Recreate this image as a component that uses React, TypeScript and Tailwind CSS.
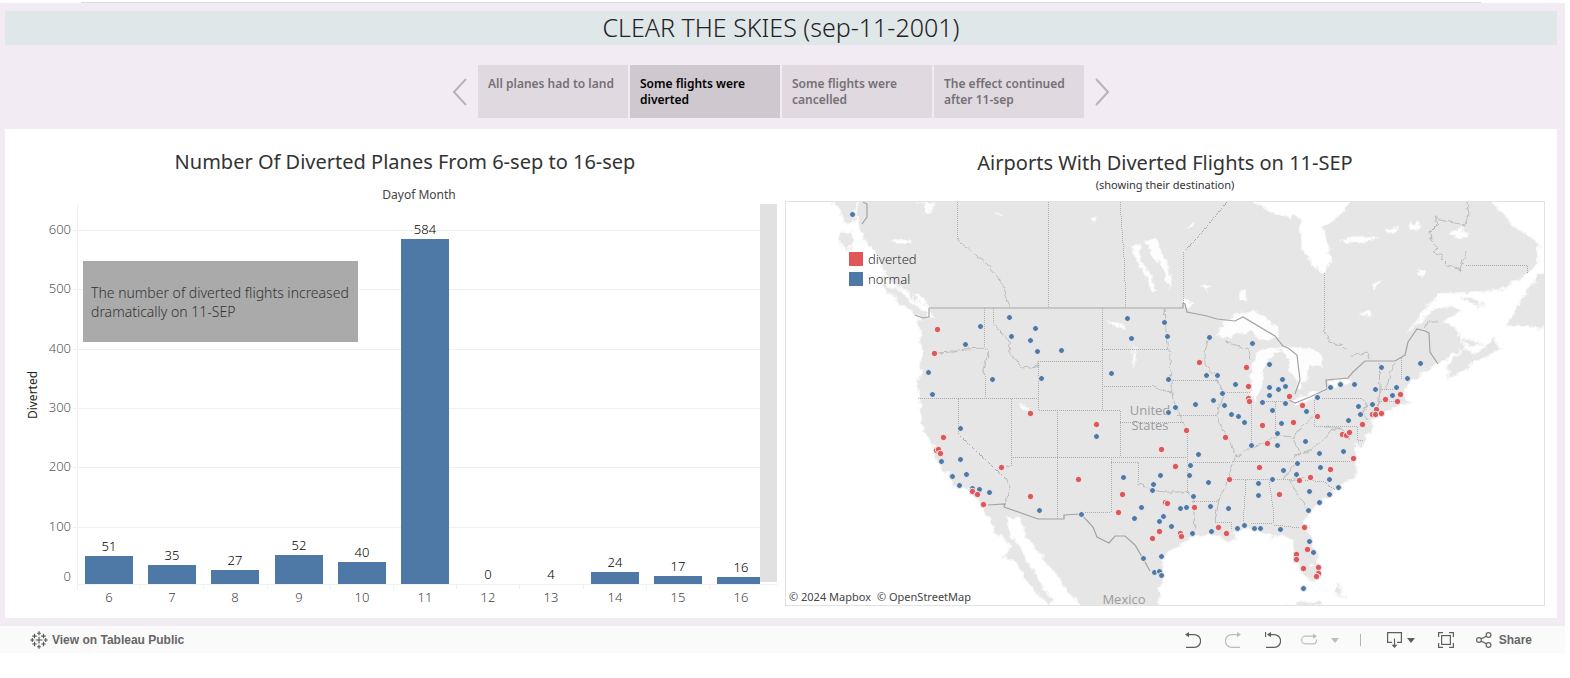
import type { ReactNode } from "react";

type Point = [number, number];

const steps = [
  { label: "All planes had to land", active: false },
  { label: "Some flights were diverted", active: true },
  { label: "Some flights were cancelled", active: false },
  { label: "The effect continued after 11-sep", active: false },
];

const days = [
  { day: 6, count: 51 },
  { day: 7, count: 35 },
  { day: 8, count: 27 },
  { day: 9, count: 52 },
  { day: 10, count: 40 },
  { day: 11, count: 584 },
  { day: 12, count: 0 },
  { day: 13, count: 4 },
  { day: 14, count: 24 },
  { day: 15, count: 17 },
  { day: 16, count: 16 },
];

const ticks = [100, 200, 300, 400, 500, 600];

const normalAirports: Point[] = [
  [852, 214], [1009, 317], [980, 326], [1035, 328], [1011, 336], [1030, 340], [965, 344], [1037, 351],
  [928, 372], [992, 379], [932, 394], [1127, 318], [1164, 322], [1131, 338], [1167, 336], [1061, 350],
  [1041, 378], [1111, 373], [1168, 379], [1209, 337], [1252, 343], [1206, 375], [1217, 375], [1235, 384],
  [1222, 393], [1213, 400], [1269, 364], [1282, 379], [1285, 386], [1278, 389], [1269, 387], [1269, 395],
  [1381, 367], [1420, 363], [1407, 378], [1396, 387], [1392, 395], [1375, 389], [1354, 384], [1340, 384],
  [1330, 387], [1317, 397], [960, 428], [960, 459], [941, 461], [966, 474], [952, 476], [959, 485],
  [972, 488], [979, 489], [989, 492], [975, 493], [1039, 510], [1081, 514], [1096, 436], [1175, 407],
  [1168, 412], [1195, 404], [1224, 405], [1231, 414], [1238, 416], [1244, 422], [1262, 402], [1285, 403],
  [1272, 410], [1281, 423], [1277, 433], [1277, 445], [1251, 445], [1306, 411], [1305, 441], [1319, 453],
  [1343, 451], [1348, 420], [1198, 454], [1190, 465], [1189, 475], [1208, 482], [1193, 496], [1160, 475],
  [1153, 484], [1152, 490], [1123, 477], [1141, 507], [1134, 518], [1163, 516], [1159, 521], [1171, 526],
  [1180, 508], [1186, 507], [1210, 506], [1228, 508], [1192, 533], [1211, 531], [1237, 528], [1244, 525],
  [1254, 528], [1260, 528], [1280, 529], [1258, 483], [1258, 495], [1272, 479], [1283, 470], [1297, 463],
  [1296, 474], [1320, 467], [1329, 479], [1338, 487], [1329, 494], [1309, 491], [1319, 502], [1308, 510],
  [1309, 541], [1313, 552], [1303, 588], [1143, 558], [1161, 556], [1154, 572], [1159, 571], [1161, 575],
  [1372, 404], [1358, 406], [1360, 414],
];

const divertedAirports: Point[] = [
  [937, 329], [934, 353], [1199, 362], [1246, 367], [1248, 386], [1289, 396], [1400, 394], [1385, 399],
  [1397, 401], [943, 437], [936, 450], [938, 449], [940, 453], [972, 491], [977, 494], [983, 504],
  [1001, 467], [1030, 413], [1030, 496], [1078, 479], [1096, 424], [1118, 512], [1248, 398], [1249, 401],
  [1302, 405], [1317, 416], [1293, 422], [1262, 425], [1267, 443], [1225, 437], [1186, 430], [1161, 449],
  [1175, 466], [1259, 467], [1229, 479], [1299, 480], [1310, 477], [1330, 469], [1279, 494], [1122, 494],
  [1165, 502], [1167, 503], [1194, 507], [1159, 531], [1152, 538], [1180, 533], [1181, 536], [1218, 527],
  [1226, 533], [1304, 527], [1307, 549], [1296, 554], [1296, 559], [1303, 568], [1318, 567], [1318, 573],
  [1316, 576], [1376, 409], [1372, 414], [1375, 414], [1381, 413], [1362, 424], [1342, 434], [1346, 435],
  [1349, 432], [1353, 458],
];

const land = [
  // Mainland, clockwise from the northern Pacific coast
  "M857 190 L858 218 862 233 868 243 876 252 883 266 888 277 896 287 908 291 914 300 927 303 931 309 935 319 929 319 917 318 920 330 922 345 922 357 921 370 918 383 919 398 921 417 925 433 934 445 938 462 948 473 954 483 968 488 977 496 983 507 990 518 997 533 1012 546 1005 557 1018 563 1028 582 1047 603 1053 601 1042 587 1033 572 1022 553 1012 537 1004 517 1020 518 1027 537 1043 557 1055 573 1067 588 1084 610 L1158 610 1158 590 1162 577 1161 560 1172 548 1193 537 1210 533 1220 537 1228 540 1235 538 1232 532 1243 527 1260 530 1273 537 1282 533 1293 540 1297 557 1302 572 1310 582 1318 580 1321 570 1313 547 1307 530 1305 520 1313 507 1330 493 1340 485 1350 480 1357 472 1355 458 1352 443 1362 447 1365 437 1373 427 1370 418 1388 410 1408 402 1400 397 1405 390 1412 380 1437 363 1463 348 1460 340 1455 327 1443 322 1460 312 1453 307 1433 310 1405 335 1423 310 1440 293 1500 290 1527 273 1538 265 1538 243 1523 233 1507 220 1484 190 L1352 190 1350 202 1340 215 1325 227 1332 257 1330 265 1325 273 1317 270 1300 248 1300 220 1298 218 1275 215 1245 196 1245 190 Z",
  // Vancouver Island, Haida Gwaii, Alaska panhandle
  "M881 277 L888 287 900 292 912 303 925 313 927 319 915 313 900 302 885 287 Z",
  "M841 233 L852 233 851 247 847 251 840 240 Z",
  "M831 190 L835 203 842 213 843 221 853 222 855 206 853 190 Z",
  // Nova Scotia, Prince Edward Island, Newfoundland, Anticosti
  "M1447 367 L1450 378 1473 363 1500 348 1493 340 1477 353 1463 349 Z",
  "M1461 340 L1470 346 1480 344 1472 341 Z",
  "M1560 262 L1540 275 1523 297 1507 325 1560 328 Z",
  "M1462 296 L1475 300 1484 306 1470 303 Z",
  // Bahamas, Cuba
  "M1336 583 L1340 590 1342 595 1337 591 Z",
  "M1288 606 L1300 602 1318 604 1320 606 Z",
];

const lakes = [
  "M1215 337 L1225 322 1240 312 1260 312 1277 327 1279 338 1262 340 1250 330 1230 338 Z",
  "M1272 347 L1256 353 1250 377 1252 397 1254 402 1259 395 1263 387 1262 370 1272 356 1285 350 Z",
  "M1273 345 L1297 348 1312 349 1321 357 1322 367 1312 363 1303 384 1297 390 1296 380 1292 373 1287 358 Z",
  "M1290 402 L1305 395 1324 389 1312 400 1297 406 Z",
  "M1327 384 L1338 379 1352 379 1350 383 1332 386 Z",
  "M1145 240 L1157 238 1163 256 1172 277 1168 290 1165 275 1152 253 Z",
  "M1131 243 L1140 245 1141 262 1150 272 1157 290 1151 290 1146 274 1137 262 Z",
  "M1020 403 L1024 404 1029 412 1024 411 Z",
  "M1239 291 L1246 291 1246 301 1238 300 Z",
  "M1450 233 L1460 229 1469 234 1462 238 1450 236 Z",
  "M1340 239 L1360 236 1378 238 1362 243 1343 242 Z",
  "M1386 230 L1398 226 1396 232 1388 233 Z",
  "M1410 224 L1420 223 1418 230 1410 230 Z",
  "M1419 268 L1426 270 1423 279 1418 275 Z",
  "M1382 278 L1374 290 1373 285 Z",
  "M1360 315 L1370 311 1372 316 Z",
  "M1091 217 L1098 216 1096 221 Z",
  "M1187 227 L1195 222 1193 227 Z",
  "M1183 299 L1193 302 1190 307 1184 305 Z",
  "M1200 287 L1212 288 1206 291 Z",
  "M890 241 L902 238 914 243 900 244 Z",
  "M918 202 L935 203 930 214 922 204 Z",
  "M993 213 L1005 213 1000 215 Z",
  "M1108 320 L1118 323 1126 327 1117 328 Z",
  "M1134 345 L1136 360 1133 367 1133 357 Z",
  "M1310 563 L1314 563 1314 567 1310 566 Z",
  "M911 293 L921 298 928 301 926 307 918 302 Z",
];

const straightBorders = [
  "M957 202 V238", "M1048 202 V308", "M1120 202 L1124 257 1126 307", "M1227 202 L1198 237 1183 253 V303",
  "M1324 273 V330", "M1466 265 H1527 V273", "M984 308 V348", "M993 308 V323", "M918 398 H1038",
  "M958 399 V434 L1006 479", "M1011 399 V467", "M1038 361 V410 H1120 V457", "M1038 361 H1102", "M1102 308 V410",
  "M1057 410 V519", "M1011 457 H1187", "M1120 422 H1183", "M1102 349 H1168", "M1102 386 H1152",
  "M1171 380 H1219", "M1177 415 H1216", "M1187 430 L1188 493", "M1187 462 H1230", "M1192 501 H1219",
  "M1111 457 V512 H1081", "M1111 462 H1138 V483", "M1215 522 H1231 L1232 530", "M1246 480 L1243 525",
  "M1269 480 L1274 515 1273 523 H1250", "M1274 525 L1300 528", "M1229 479 H1290", "M1233 461 H1352",
  "M1251 405 V445", "M1275 402 V436", "M1262 401 H1288", "M1225 392 H1250", "M1314 398 V426 H1357 V440 H1364",
  "M1320 398 H1362", "M1380 390 L1400 389", "M1379 401 H1397", "M1401 358 V380", "M985 376 V398",
  "M1305 480 L1324 482 1335 490",
];

const riverBorders = [
  "M957 238 L960 242 972 252 987 264 1000 280 1005 290 1006 298 1011 307",
  "M1324 330 L1330 342 1343 346 1352 355 1368 353 1370 359",
  "M1467 202 L1469 215 1465 225 1450 222 1440 220 1434 216 1438 224 1430 232 1431 240 1437 248 1434 252 1442 255 1442 260 1447 265 1460 270 1463 260 1467 252",
  "M1424 329 L1427 322 1438 322", "M984 348 L989 352 983 370 985 376", "M937 353 L953 352 965 349 984 348",
  "M993 323 L1009 341 1010 353 1022 368 1038 366 1038 361", "M1006 466 L1011 467", "M1006 479 L1010 487 1006 500 1005 504",
  "M1152 386 L1160 390 1172 392", "M1164 308 L1166 330 1169 350 1170 355 1171 385 1173 400 1178 410 1183 422 1187 430",
  "M1209 337 L1205 352 1205 365 1216 375 1220 385 1224 395 1216 415 1222 428 1232 445 1236 455 1232 467 1226 485 1219 500 1216 515 1215 522",
  "M1188 493 L1193 497 1194 515 1195 530", "M1138 483 L1150 490 1165 492 1180 492 1188 493",
  "M1283 478 L1290 470 1300 462", "M1289 480 L1298 495 1307 508", "M1290 480 L1305 477",
  "M1236 457 L1251 448 1262 443 1277 436 1293 438 1303 425 1314 415", "M1225 341 L1240 347 1249 350 1251 360",
  "M1362 398 L1367 405 1363 412 1367 420", "M1379 362 L1380 390 1378 410", "M1395 362 L1390 375 1386 390",
  "M1293 455 L1305 453 1320 443 1332 430 1340 428", "M1293 438 L1297 448 1302 453 1290 460", "M1324 427 L1335 427 1345 431 1350 440",
];

const nationalBorders = [
  "M929 308 H1183 V303",
  "M1183 303 L1185 304 1187 312 1197 314 1207 316 1217 319 1235 321 1243 317 1275 336 1283 346 1288 348 1297 355 1300 380 1295 394",
  "M1289 400 L1295 403 1310 397 1327 389 1326 380 1348 378 1353 372 1365 361 H1395 L1405 355 1408 342 1417 329 1425 331 1429 333 1430 352 1438 364",
  "M988 505 L1005 504 1004 507 1038 519 H1064 V515 L1081 514 1093 527 1097 537 1109 543 1115 536 1125 536 1135 545 1145 562 1150 571",
  "M863 202 L867 204 867 217 862 224", "M915 315 L923 318 929 317 929 308",
];

function MapView() {
  return (
    <svg viewBox="786 202 758 403" className="block h-auto w-full" role="img" aria-label="Map of airports">
      <defs>
        <filter id="coast" x="-5%" y="-5%" width="110%" height="110%">
          <feTurbulence type="fractalNoise" baseFrequency="0.12" numOctaves="3" seed="4" />
          <feDisplacementMap in="SourceGraphic" scale="9" xChannelSelector="R" yChannelSelector="G" />
        </filter>
        <filter id="river" x="-5%" y="-5%" width="110%" height="110%">
          <feTurbulence type="fractalNoise" baseFrequency="0.2" numOctaves="2" seed="9" />
          <feDisplacementMap in="SourceGraphic" scale="5" xChannelSelector="R" yChannelSelector="G" />
        </filter>
      </defs>
      <g filter="url(#coast)">
        <path d={land.join(" ")} fill="#e6e6e6" stroke="#f6f6f6" strokeWidth="3" paintOrder="stroke" />
        <path d={lakes.join(" ")} fill="#fdfdfd" stroke="#f2f2f2" strokeWidth="1" />
      </g>
      <g fill="none" stroke="#adadad" strokeWidth="1">
        <path d={straightBorders.join(" ")} shapeRendering="crispEdges" strokeDasharray="1 1" />
        <path d={riverBorders.join(" ")} stroke="#bbb" filter="url(#river)" />
      </g>
      <path d={nationalBorders.join(" ")} fill="none" stroke="#a3a3a3" strokeWidth="1.2" />
      <g fill="#9b9b9b" fontSize="13" fontFamily="'Open Sans', 'Noto Sans', sans-serif" textAnchor="middle">
        <text x="1150" y="415">United</text>
        <text x="1150" y="430">States</text>
        <text x="1124" y="604">Mexico</text>
      </g>
      <g stroke="#f3f3f3" strokeWidth="1">
        {normalAirports.map(([x, y], i) => (
          <circle key={i} cx={x + 0.5} cy={y + 0.5} r="3" fill="#4e79a7" />
        ))}
        {divertedAirports.map(([x, y], i) => (
          <circle key={i} cx={x + 0.5} cy={y + 0.5} r="3.2" fill="#dd5658" />
        ))}
      </g>
    </svg>
  );
}

function BarChart() {
  const left = 77;
  const pitch = 63.2;
  const zero = 586.2;
  const base = 584;
  const unit = 0.594;
  return (
    <svg viewBox="5 187 780 420" className="block h-auto w-full font-light" role="img" aria-label="Diverted flights by day" fontFamily="'Noto Sans', 'Open Sans', sans-serif">
      <text x="419" y="199" fontSize="12" textAnchor="middle" fill="#444" className="font-normal">Dayof Month</text>
      <text transform="translate(37 395) rotate(-90)" fontSize="12" textAnchor="middle" fill="#222" className="font-normal">Diverted</text>
      <g shapeRendering="crispEdges" fill="#f0f0f0">
        <rect x={left} y="204" width="1" height="386" />
        {ticks.map((t) => (
          <rect key={t} x="73" y={Math.round(zero - t * unit)} width="687" height="1" />
        ))}
        <rect x={left} y={base} width="700" height="1" />
        {days.slice(1).map((d, i) => (
          <rect key={d.day} x={Math.round(left + pitch * (i + 1))} y={base} width="1" height="5" />
        ))}
      </g>
      <g fontSize="13" fill="#555" textAnchor="end">
        {ticks.map((t) => (
          <text key={t} x="71" y={Math.round(zero - t * unit) + 4}>{t}</text>
        ))}
        <text x="71" y="581">0</text>
      </g>
      {days.map((d, i) => {
        const x = Math.round(85 + pitch * i);
        const top = Math.min(base, Math.round(zero - d.count * unit));
        return (
          <g key={d.day}>
            {d.count > 4 && (
              <rect x={x} y={top} width={Math.min(48, 760 - x)} height={base - top} fill="#4e79a7" shapeRendering="crispEdges" />
            )}
            <text x={x + 24} y={top - 5} fontSize="13" textAnchor="middle" fill="#000">{d.count}</text>
            <text x={x + 24} y="602" fontSize="13" textAnchor="middle" fill="#444">{d.day}</text>
          </g>
        );
      })}
      <rect x="760" y="204" width="17" height="378" fill="#e1e1e1" />
    </svg>
  );
}

function ToolButton({ label, children, faded = false }: { label: string; children: ReactNode; faded?: boolean }) {
  return (
    <button type="button" aria-label={label} className={faded ? "flex text-[#bdbdbd]" : "flex text-[#5f5f5f]"}>
      {children}
    </button>
  );
}

function Glyph({ children, width = 16 }: { children: ReactNode; width?: number }) {
  return (
    <svg width={width} height="16" viewBox={`0 0 ${width} 16`} fill="none" stroke="currentColor" strokeWidth="1.2">
      {children}
    </svg>
  );
}

function TableauMark() {
  const crosses: [number, number, number][] = [
    [8, 8, 3], [8, 2, 1.7], [8, 14, 1.7], [2, 8, 1.7], [14, 8, 1.7],
    [4, 4.5, 2], [12, 4.5, 2], [4, 11.5, 2], [12, 11.5, 2],
  ];
  return (
    <svg width="18" height="18" viewBox="0 0 16 16" stroke="#555" strokeWidth="1" fill="none">
      {crosses.map(([x, y, r]) => (
        <path key={`${x}-${y}`} d={`M${x - r} ${y} H${x + r} M${x} ${y - r} V${y + r}`} />
      ))}
    </svg>
  );
}

function Toolbar() {
  return (
    <footer className="flex h-[27px] items-center bg-[#fafafa] pr-[33px] pl-[30px] font-['Liberation_Sans',Arial,sans-serif] text-xs font-bold text-[#666]">
      <a href="#tableau" className="flex items-center gap-1">
        <TableauMark />
        View on Tableau Public
      </a>
      <div className="ml-auto flex items-center">
        <div className="flex items-center gap-6">
          <ToolButton label="Undo">
            <Glyph>
              <path d="M1 2.6 H9.2 A6.2 6.2 0 0 1 9.2 15.4 H1" />
              <path d="M4 0 L0 2.6 L4 5.2 Z" fill="currentColor" stroke="none" />
            </Glyph>
          </ToolButton>
          <ToolButton label="Redo" faded>
            <Glyph>
              <path d="M15 2.6 H6.8 A6.2 6.2 0 0 0 6.8 15.4 H15" />
              <path d="M12 0 L16 2.6 L12 5.2 Z" fill="currentColor" stroke="none" />
            </Glyph>
          </ToolButton>
          <ToolButton label="Reset">
            <Glyph>
              <path d="M0.6 0 V5 M3 2.6 H9.2 A6.2 6.2 0 0 1 9.2 15.4 H1" />
              <path d="M6 0 L2 2.6 L6 5.2 Z" fill="currentColor" stroke="none" />
            </Glyph>
          </ToolButton>
        </div>
        <span className="ml-5">
          <ToolButton label="Refresh" faded>
            <Glyph>
              <path d="M13 4.2 H4.4 A3.8 3.8 0 0 0 4.4 11.8 H12 A3.4 3.4 0 0 0 15.4 8.4 V7.4" />
              <path d="M12 1.6 L16 4.2 L12 6.8 Z" fill="currentColor" stroke="none" />
            </Glyph>
          </ToolButton>
        </span>
        <span className="ml-3.5">
          <ToolButton label="Refresh options" faded>
            <Glyph width={8}><path d="M0 6 H8 L4 11 Z" fill="currentColor" stroke="none" /></Glyph>
          </ToolButton>
        </span>
        <span className="ml-[21px] h-3 w-px bg-[#b5b5b5]" />
        <span className="ml-[26px]">
          <ToolButton label="Download">
            <Glyph width={28}>
              <path d="M5 10.4 H0.6 V0.6 H14.4 V10.4 H10 M7.5 6.5 V14" />
              <path d="M4.5 12.8 L7.5 16 L10.5 12.8 Z M20 6 H28 L24 11 Z" fill="currentColor" stroke="none" />
            </Glyph>
          </ToolButton>
        </span>
        <span className="ml-[23px]">
          <ToolButton label="Full screen">
            <Glyph>
              <rect x="3.6" y="3.6" width="8.8" height="8.8" />
              <path d="M0.6 5 V0.6 H5 M11 0.6 H15.4 V5 M15.4 11 V15.4 H11 M5 15.4 H0.6 V11" />
            </Glyph>
          </ToolButton>
        </span>
        <button type="button" className="ml-[22px] flex items-center gap-[7px]">
          <Glyph>
            <circle cx="3" cy="8" r="2.4" />
            <circle cx="12.5" cy="3" r="2.4" />
            <circle cx="12.5" cy="13" r="2.4" />
            <path d="M5.2 6.9 L10.3 4.2 M5.2 9.1 L10.3 11.8" />
          </Glyph>
          Share
        </button>
      </div>
    </footer>
  );
}

function StepArrow({ label, path }: { label: string; path: string }) {
  return (
    <button type="button" aria-label={label} className="text-[#b9b2b9]">
      <svg width="15" height="28" viewBox="0 0 15 28" fill="none" stroke="currentColor" strokeWidth="2">
        <path d={path} />
      </svg>
    </button>
  );
}

export default function App() {
  return (
    <div className="bg-white pr-[5px] font-['Noto_Sans','Open_Sans',sans-serif] text-[#333]">
      <div className="h-[3px] pt-0.5">
        <div className="mr-[84px] ml-[81px] h-px bg-[#dcdcdc]" />
      </div>
      <main className="bg-[#f2ebf3] pt-2 pr-2 pb-2 pl-[5px]">
        <h1 className="flex h-[34px] items-center justify-center bg-[#dfe7e9] text-[25px] font-light text-[#222]">
          CLEAR THE SKIES (sep-11-2001)
        </h1>
        <nav className="mt-5 flex items-center justify-center gap-[11px]">
          <StepArrow label="Previous" path="M14 1 L2 14 L14 27" />
          <div className="flex gap-0.5">
            {steps.map((s) => (
              <button
                key={s.label}
                type="button"
                className={
                  s.active
                    ? "flex h-[53px] w-[150px] bg-[#cfc8cf] px-2.5 pt-[11px] text-left text-xs leading-4 font-semibold text-black"
                    : "flex h-[53px] w-[150px] bg-[#e0d9e0] px-2.5 pt-[11px] text-left text-xs leading-4 font-semibold text-[#757075]"
                }
              >
                {s.label}
              </button>
            ))}
          </div>
          <StepArrow label="Next" path="M1 1 L13 14 L1 27" />
        </nav>
        <div className="mt-[11px] grid grid-cols-[780fr_772fr] bg-white pb-[11px]">
          <section className="pt-5">
            <h2 className="pl-5 text-center text-xl leading-[26px]">Number Of Diverted Planes From 6-sep to 16-sep</h2>
            <div className="relative mt-3">
              <BarChart />
              <p className="absolute top-[74px] left-[78px] flex h-[81px] w-[275px] items-center bg-[#aaa] pl-2 text-sm leading-[19px] font-light">
                The number of diverted flights increased dramatically on 11-SEP
              </p>
            </div>
          </section>
          <section className="pt-[21px] pr-3">
            <h2 className="text-center text-xl leading-[26px]">Airports With Diverted Flights on 11-SEP</h2>
            <p className="text-center text-[11px] leading-[18px]">(showing their destination)</p>
            <div className="relative mt-[7px] border border-[#e2e2e2]">
              <MapView />
              <ul className="absolute top-[47px] left-[63px] flex flex-col text-[13px] leading-5 font-light">
                <li className="flex items-center gap-[5px]"><span className="size-3.5 bg-[#e15759]" />diverted</li>
                <li className="flex items-center gap-[5px]"><span className="size-3.5 bg-[#4e79a7]" />normal</li>
              </ul>
              <div className="absolute bottom-0 left-0 flex gap-1.5 bg-white/70 px-[3px] text-[11px] leading-4 text-[#444]">
                <a href="#mapbox">© 2024 Mapbox</a>
                <a href="#osm">© OpenStreetMap</a>
              </div>
            </div>
          </section>
        </div>
      </main>
      <Toolbar />
    </div>
  );
}
